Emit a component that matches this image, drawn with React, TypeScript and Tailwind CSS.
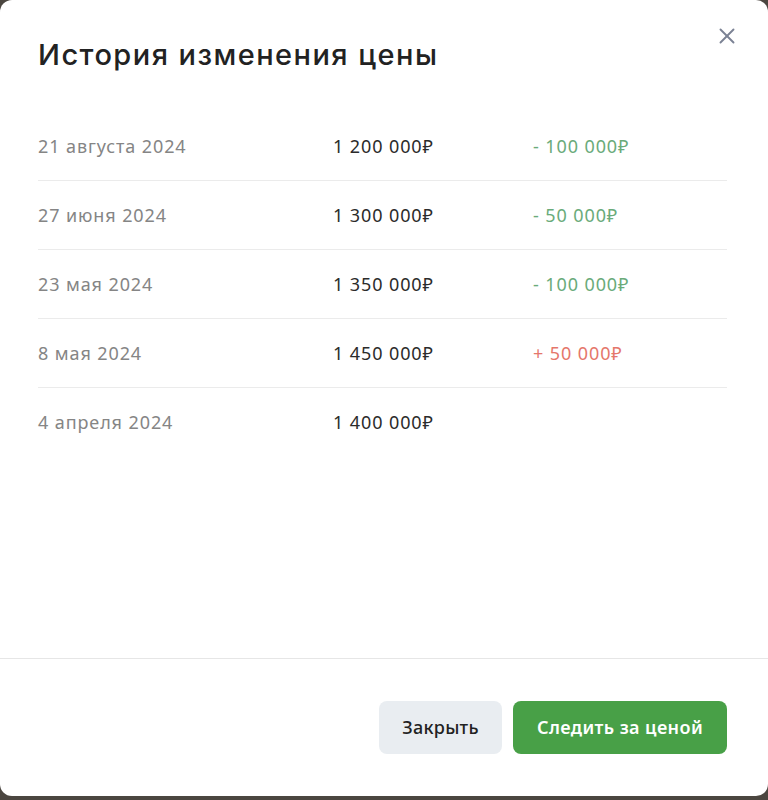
import { X } from "lucide-react";

const rows = [
  { date: "21 августа 2024", price: "1 200 000₽", change: "- 100 000₽", up: false },
  { date: "27 июня 2024", price: "1 300 000₽", change: "- 50 000₽", up: false },
  { date: "23 мая 2024", price: "1 350 000₽", change: "- 100 000₽", up: false },
  { date: "8 мая 2024", price: "1 450 000₽", change: "+ 50 000₽", up: true },
  { date: "4 апреля 2024", price: "1 400 000₽", change: "", up: false },
];

export default function App() {
  return (
    <div className="h-[800px] w-[768px] bg-[#4b4640] font-['Noto_Sans',sans-serif]">
      <div className="relative flex h-[796px] flex-col rounded-xl bg-white">
        <button className="absolute right-[28px] top-[23px] text-[#7b8294]">
          <X size={26} strokeWidth={1.75} />
        </button>
        <div className="flex flex-1 flex-col px-[38px]">
          <h2 className="pt-[36px] font-['Inter',sans-serif] text-[29px] font-medium leading-[38px] tracking-[1.45px] text-[#222]">
            История изменения цены
          </h2>
          <div className="mt-[38px] pr-[3px]">
            {rows.map((r, i) => (
              <div
                key={r.date}
                className={
                  "grid h-[69px] grid-cols-[295px_200px_1fr] items-center text-[18px] tracking-[0.9px] " +
                  (i < rows.length - 1 ? "border-b border-[#ebebeb]" : "")
                }
              >
                <span className="text-[#858585]">{r.date}</span>
                <span className="text-[#2b2b2b]">{r.price}</span>
                <span className={r.up ? "text-[#e5776b]" : "text-[#6aab7a]"}>{r.change}</span>
              </div>
            ))}
          </div>
        </div>
        <div className="flex justify-end gap-[11px] border-t border-[#e6e6e6] px-[41px] pb-[42px] pt-[42px]">
          <button className="h-[53px] w-[123px] rounded-lg bg-[#e9edf1] text-[18px] font-medium tracking-[0.3px] text-[#222]">
            Закрыть
          </button>
          <button className="h-[53px] w-[214px] rounded-lg bg-[#48a047] text-[18px] font-semibold tracking-[0.4px] text-white">
            Следить за ценой
          </button>
        </div>
      </div>
    </div>
  );
}
